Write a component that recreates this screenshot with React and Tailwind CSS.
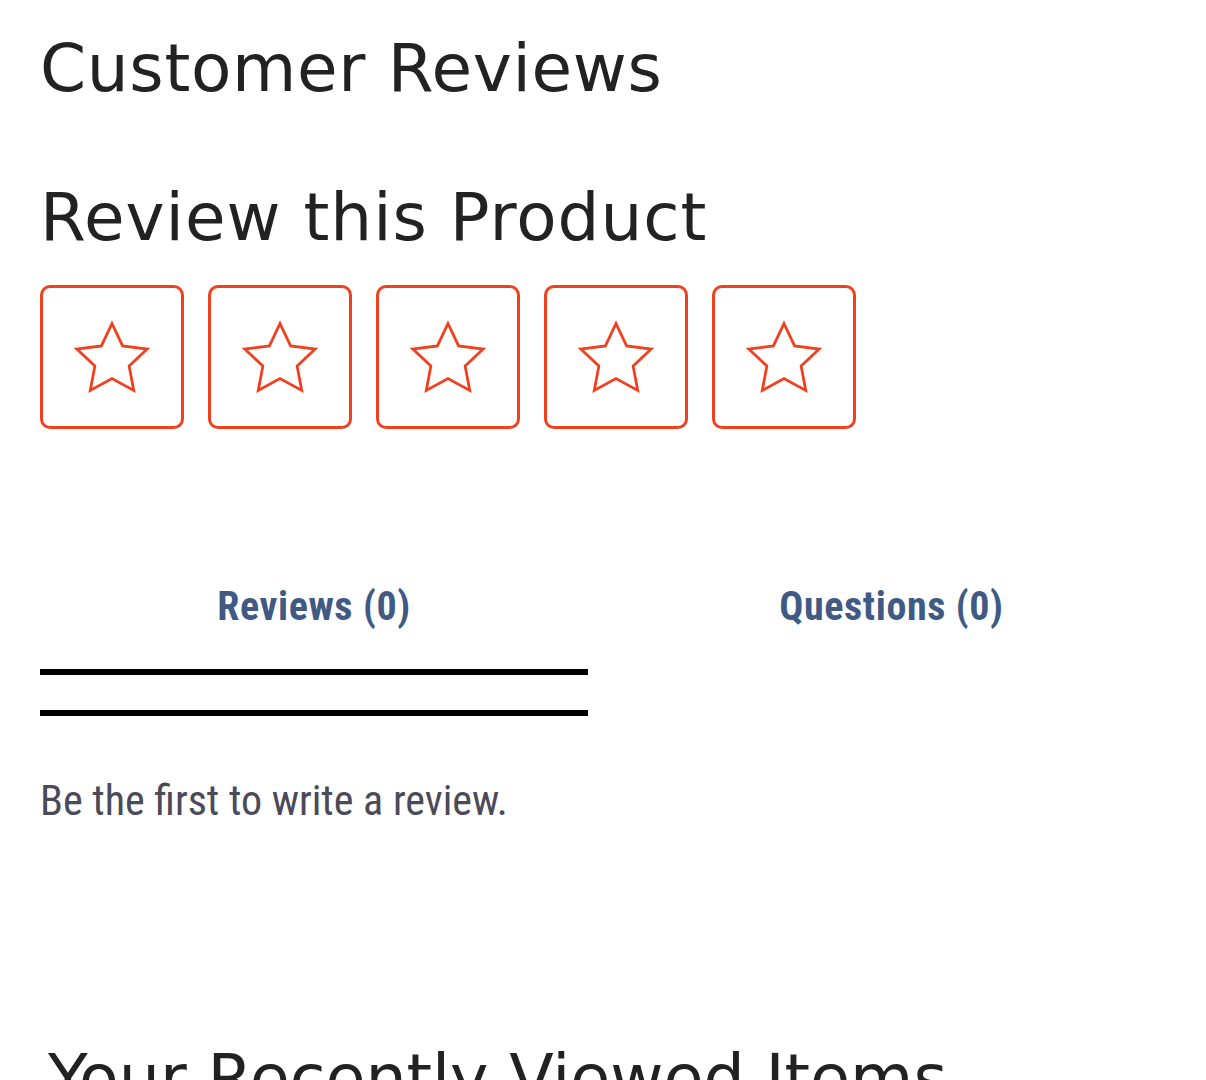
import React from 'react';

// five-point outline star, drawn in an 80x76 box
const STAR_POINTS = Array.from({ length: 10 }, (_, i) => {
  const r = i % 2 === 0 ? 37 : 18;
  const a = ((-90 + i * 36) * Math.PI) / 180;
  return `${(40 + r * Math.cos(a)).toFixed(2)},${(41.5 + r * Math.sin(a)).toFixed(2)}`;
}).join(' ');

function StarButton({ value }) {
  return (
    <button
      type="button"
      aria-label={`Rate ${value} out of 5`}
      className="w-36 h-36 flex items-center justify-center rounded-[10px] border-[3px] border-[#f0401f] bg-white"
    >
      <svg width="80" height="76" viewBox="0 0 80 76" fill="none">
        <polygon points={STAR_POINTS} stroke="#f0401f" strokeWidth="2.8" strokeLinejoin="miter" />
      </svg>
    </button>
  );
}

function App() {
  const heading = "font-['DejaVu_Sans','Open_Sans',sans-serif] font-normal leading-none text-[#222222]";
  const condensed = "font-['Roboto_Condensed','Liberation_Sans_Narrow','Roboto',sans-serif]";

  return (
    <div className="min-h-screen bg-white overflow-hidden px-10 pt-9">
      {/* Reviews header */}
      <h2 className={`${heading} text-[66px] tracking-[0.7px]`}>Customer Reviews</h2>
      <h3 className={`${heading} text-[66px] tracking-[1px] mt-[83px]`}>Review this Product</h3>

      {/* Rating picker */}
      <div className="mt-[34px] flex gap-6">
        {[1, 2, 3, 4, 5].map((n) => (
          <StarButton key={n} value={n} />
        ))}
      </div>

      {/* Tabs */}
      <div className={`${condensed} mt-[158px] -mr-[29px] flex`}>
        <button
          type="button"
          className="w-[548px] shrink-0 pb-[42px] border-b-[6px] border-black text-[40px] leading-none font-bold tracking-[0.6px] text-[#405a84]"
        >
          Reviews (0)
        </button>
        <button
          type="button"
          className="flex-1 pb-[42px] border-b-[6px] border-transparent text-[40px] leading-none font-bold tracking-[0.6px] text-[#405a84]"
        >
          Questions (0)
        </button>
      </div>
      <div className="mt-[35px] h-[6px] w-[548px] bg-black"></div>

      {/* Tab panel */}
      <p className={`${condensed} mt-16 text-[42px] leading-none text-[#4a4a58]`}>
        Be the first to write a review.
      </p>

      <h2 className={`${heading} text-[65px] mt-[224px] pl-2 whitespace-nowrap`}>Your Recently Viewed Items</h2>
    </div>
  );
}

export default App;
